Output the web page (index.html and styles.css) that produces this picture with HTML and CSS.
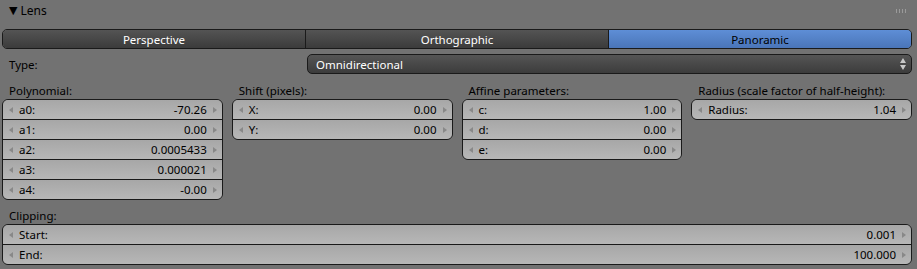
FILE: index.html
```html
<!DOCTYPE html>
<html lang="en">
  <head>
    <meta charset="UTF-8" />
    <title>Lens</title>
    <link rel="stylesheet" href="styles.css">
  </head>
  <body>
    <div class="panel">
      <div class="panel-header">
        <span class="caret">&#9660;</span>
        <span class="title">Lens</span>
        <span class="grip"></span>
      </div>

      <div class="tabs">
        <div class="tab">Perspective</div>
        <div class="tab">Orthographic</div>
        <div class="tab active">Panoramic</div>
      </div>

      <div class="type-row">
        <span class="type-label">Type:</span>
        <div class="dropdown">
          <span>Omnidirectional</span>
          <span class="updown"><i class="up"></i><i class="down"></i></span>
        </div>
      </div>

      <div class="columns">
        <div class="group">
          <div class="group-label">Polynomial:</div>
          <div class="fields">
            <div class="field"><span class="arr left"></span><span class="name">a0:</span><span class="val">-70.26</span><span class="arr right"></span></div>
            <div class="field"><span class="arr left"></span><span class="name">a1:</span><span class="val">0.00</span><span class="arr right"></span></div>
            <div class="field"><span class="arr left"></span><span class="name">a2:</span><span class="val">0.0005433</span><span class="arr right"></span></div>
            <div class="field"><span class="arr left"></span><span class="name">a3:</span><span class="val">0.000021</span><span class="arr right"></span></div>
            <div class="field"><span class="arr left"></span><span class="name">a4:</span><span class="val">-0.00</span><span class="arr right"></span></div>
          </div>
        </div>
        <div class="group">
          <div class="group-label">Shift (pixels):</div>
          <div class="fields">
            <div class="field"><span class="arr left"></span><span class="name">X:</span><span class="val">0.00</span><span class="arr right"></span></div>
            <div class="field"><span class="arr left"></span><span class="name">Y:</span><span class="val">0.00</span><span class="arr right"></span></div>
          </div>
        </div>
        <div class="group">
          <div class="group-label">Affine parameters:</div>
          <div class="fields">
            <div class="field"><span class="arr left"></span><span class="name">c:</span><span class="val">1.00</span><span class="arr right"></span></div>
            <div class="field"><span class="arr left"></span><span class="name">d:</span><span class="val">0.00</span><span class="arr right"></span></div>
            <div class="field"><span class="arr left"></span><span class="name">e:</span><span class="val">0.00</span><span class="arr right"></span></div>
          </div>
        </div>
        <div class="group">
          <div class="group-label">Radius (scale factor of half-height):</div>
          <div class="fields">
            <div class="field"><span class="arr left"></span><span class="name">Radius:</span><span class="val">1.04</span><span class="arr right"></span></div>
          </div>
        </div>
      </div>

      <div class="clipping">
        <div class="group-label">Clipping:</div>
        <div class="fields">
          <div class="field"><span class="arr left"></span><span class="name">Start:</span><span class="val">0.001</span><span class="arr right"></span></div>
          <div class="field"><span class="arr left"></span><span class="name">End:</span><span class="val">100.000</span><span class="arr right"></span></div>
        </div>
      </div>
    </div>
  </body>
</html>
```

FILE: styles.css
```css
* {
  margin: 0;
  padding: 0;
  box-sizing: border-box;
}

body {
  background: #727272;
  font-family: "Noto Sans", "DejaVu Sans", sans-serif;
  font-size: 11.5px;
  color: #000;
}

.panel {
  width: 917px;
  height: 269px;
  padding: 0 5px 0 2px;
}

/* header */
.panel-header {
  height: 21px;
  display: flex;
  align-items: center;
  padding-left: 7px;
  color: #000;
}

.caret {
  font-family: "DejaVu Sans", sans-serif;
  font-size: 11px;
  margin-right: 3px;
}

.title {
  font-size: 12px;
  flex: 1;
}

.grip {
  width: 11px;
  height: 4px;
  margin-right: 6px;
  background-image: radial-gradient(circle, #9a9a9a 0.7px, transparent 0.9px);
  background-size: 3px 2px;
}

/* tab row */
.tabs {
  display: flex;
  height: 20px;
  margin-top: 8px;
  border: 1px solid #1a1a1a;
  border-radius: 5px;
  overflow: hidden;
}

.tab {
  flex: 1;
  display: flex;
  align-items: center;
  justify-content: center;
  color: #fff;
  background: linear-gradient(#545454, #3b3b3b);
  border-left: 1px solid #1a1a1a;
}

.tab:first-child {
  border-left: none;
}

.tab.active {
  color: #000;
  background: linear-gradient(#5e8ed6, #4a75b8);
}

/* type */
.type-row {
  display: flex;
  align-items: center;
  height: 20px;
  margin-top: 5px;
}

.type-label {
  width: 305px;
  padding-left: 7px;
}

.dropdown {
  flex: 1;
  height: 20px;
  display: flex;
  align-items: center;
  justify-content: space-between;
  padding: 0 5px 0 8px;
  color: #fff;
  border: 1px solid #1a1a1a;
  border-radius: 5px;
  background: linear-gradient(#555555, #3c3c3c);
}

.updown {
  display: flex;
  flex-direction: column;
  gap: 2px;
}

.updown i {
  width: 0;
  height: 0;
  border-left: 3px solid transparent;
  border-right: 3px solid transparent;
}

.updown .up {
  border-bottom: 5px solid #c8c8c8;
}

.updown .down {
  border-top: 5px solid #c8c8c8;
}

/* groups */
.columns {
  display: grid;
  grid-template-columns: repeat(4, 1fr);
  column-gap: 9px;
  margin-top: 8px;
}

.group-label {
  height: 17px;
  padding-left: 7px;
  line-height: 17px;
}

.fields {
  border: 1px solid #1a1a1a;
  border-radius: 6px;
  overflow: hidden;
}

.field {
  height: 20px;
  display: flex;
  align-items: center;
  padding: 0 5px 0 6px;
  background: linear-gradient(#a7a7a7, #b7b7b7);
  border-top: 1px solid #1a1a1a;
}

.field:first-child {
  height: 19px;
  border-top: none;
}

.name {
  flex: 1;
  margin-left: 6px;
}

.val {
  margin-right: 6px;
}

.arr {
  width: 0;
  height: 0;
  border-top: 3px solid transparent;
  border-bottom: 3px solid transparent;
}

.arr.left {
  border-right: 4px solid #888888;
}

.arr.right {
  border-left: 4px solid #888888;
}

.clipping {
  margin-top: 7px;
}
```
